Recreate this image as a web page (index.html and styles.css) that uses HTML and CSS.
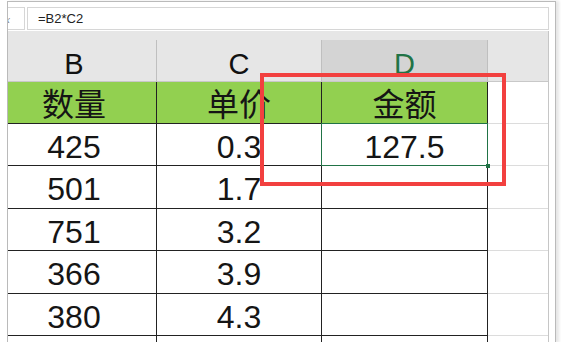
FILE: index.html
```html
<!DOCTYPE html>
<html lang="zh">
<head>
<meta charset="utf-8">
<title>金额计算</title>
<link rel="stylesheet" href="styles.css">
</head>
<body>
<div class="window">
  <div class="formula-bar">
    <div class="name-box"><span class="fx">fx</span></div>
    <div class="formula-input">=B2*C2</div>
  </div>
  <div class="sheet">
    <div class="strip"></div>
    <div class="grid">
      <div class="col-head">B</div>
      <div class="col-head">C</div>
      <div class="col-head active">D</div>
      <div class="col-head extra"></div>

      <div class="cell title">数量</div>
      <div class="cell title">单价</div>
      <div class="cell title">金额</div>
      <div class="cell extra"></div>

      <div class="cell">425</div>
      <div class="cell">0.3</div>
      <div class="cell selected">127.5</div>
      <div class="cell extra"></div>

      <div class="cell">501</div>
      <div class="cell">1.7</div>
      <div class="cell"></div>
      <div class="cell extra"></div>

      <div class="cell">751</div>
      <div class="cell">3.2</div>
      <div class="cell"></div>
      <div class="cell extra"></div>

      <div class="cell">366</div>
      <div class="cell">3.9</div>
      <div class="cell"></div>
      <div class="cell extra"></div>

      <div class="cell">380</div>
      <div class="cell">4.3</div>
      <div class="cell"></div>
      <div class="cell extra"></div>

      <div class="cell"></div>
      <div class="cell"></div>
      <div class="cell"></div>
      <div class="cell extra"></div>
    </div>
  </div>
</div>
<div class="highlight"></div>
</body>
</html>
```
FILE: styles.css
```css
html, body {
  margin: 0;
  height: 100%;
  overflow: hidden;
  background: #ffffff;
}

body {
  font-family: "Liberation Sans", "Noto Sans CJK SC", sans-serif;
  color: #111;
}

.window {
  margin: 1px 0 0 7px;
  width: 547px;
  height: 341px;
  border: 1px solid #bababa;
  border-bottom: none;
  box-sizing: content-box;
  box-shadow: 3px 0 3px rgba(0, 0, 0, 0.10);
  background: #ffffff;
  overflow: hidden;
}

.formula-bar {
  display: flex;
  gap: 2px;
  width: 541px;
  padding-top: 5px;
  height: 23px;
}

.name-box {
  width: 17px;
  box-sizing: border-box;
  border-top: 1px solid #d6d6d6;
  border-bottom: 1px solid #d6d6d6;
  border-right: 1px solid #d6d6d6;
  overflow: hidden;
  display: flex;
  align-items: center;
}

.fx {
  font-family: "Liberation Serif", serif;
  font-style: italic;
  font-size: 11px;
  color: #777;
  margin-left: -6px;
}

.formula-input {
  flex: 1;
  box-sizing: border-box;
  border: 1px solid #d6d6d6;
  padding-left: 10px;
  font-size: 13px;
  line-height: 21px;
  color: #222;
}

.sheet {
  width: 540px;
  height: 312px;
  border-right: 1px solid #c6c6c6;
  overflow: hidden;
  margin-top: 1px;
}

.strip {
  height: 9px;
  background: #e6e6e6;
}

.grid {
  display: grid;
  grid-template-columns: 165px 165px 166px 60px;
  grid-template-rows: 42px 42px repeat(6, 42.4px);
  margin-left: -16px;
}

.col-head {
  box-sizing: border-box;
  background: #e6e6e6;
  border-right: 1px solid #bfbfbf;
  border-bottom: 1px solid #c8c8c8;
  text-align: center;
  font-size: 29px;
  line-height: 34px;
  padding-top: 7px;
  color: #111;
}

.col-head.active {
  background: #d4d4d4;
  color: #217346;
}

.col-head.extra {
  border-right: none;
}

.cell {
  box-sizing: border-box;
  border-right: 1px solid #222;
  border-bottom: 1px solid #222;
  text-align: center;
  font-size: 32px;
  line-height: 35px;
  padding-top: 6px;
  color: #151515;
}

.cell.title {
  background: #92d050;
}

.cell.extra {
  border-right: none;
  border-bottom: 1px solid #dcdcdc;
}

.cell.selected {
  position: relative;
  z-index: 2;
}

.cell.selected::after {
  content: "";
  position: absolute;
  top: -1px;
  left: -1px;
  right: -1px;
  bottom: -1px;
  border: 1px solid #217346;
}

.cell.selected::before {
  content: "";
  position: absolute;
  right: -3px;
  bottom: -3px;
  width: 4px;
  height: 4px;
  background: #217346;
  z-index: 1;
}

.highlight {
  position: absolute;
  left: 260px;
  top: 73px;
  width: 246px;
  height: 113px;
  box-sizing: border-box;
  border: 4px solid #f2403f;
}
```
